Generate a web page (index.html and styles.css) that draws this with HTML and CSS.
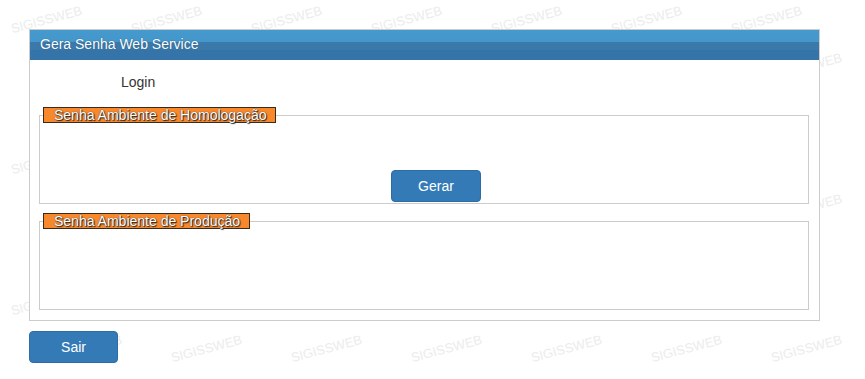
FILE: index.html
```
<html lang="pt-BR">

<head>
  <meta charset="utf-8" />
  <title>Gera Senha Web Service</title>
  <link rel="stylesheet" href="styles.css">
</head>

<body>

  <div class="marks" id="marks" aria-hidden="true"></div>

  <div class="page">
    <div class="panel">
      <div class="panel-head">Gera Senha Web Service</div>
      <div class="panel-body">
        <div class="login">Login</div>

        <fieldset class="box">
          <legend>Senha Ambiente de Homologação</legend>
          <div class="box-body">
            <button class="btn gerar">Gerar</button>
          </div>
        </fieldset>

        <fieldset class="box second">
          <legend>Senha Ambiente de Produção</legend>
          <div class="box-body"></div>
        </fieldset>
      </div>
    </div>

    <button class="btn sair">Sair</button>
  </div>

  <script>
    // background watermark, same stamp repeated on a slanted grid
    var marks = document.getElementById("marks");
    var html = "";
    for (let row = 0; row < 8; row++) {
      let shift = (10 + row * 40) % 120;
      for (let col = 0; col < 8; col++) {
        let x = shift + col * 120;
        let y = 12 + row * 47;
        if (x + 80 > 865) continue;
        html += `<span class="mark" style="left:${x}px;top:${y}px">SIGISSWEB</span>`;
      }
    }
    marks.innerHTML = html;
  </script>
</body>

</html>
```

FILE: styles.css
```
body {
  font-family: 'Liberation Sans', Arial, sans-serif;
  font-size: 14px;
  color: #333;
  background-color: #fff;
  margin: 0;
  padding: 0;
}

.marks {
  position: absolute;
  top: 0;
  left: 0;
  width: 100%;
  height: 379px;
  overflow: hidden;
}

.mark {
  position: absolute;
  font-size: 13px;
  color: #ececec;
  transform: rotate(-15deg);
  white-space: nowrap;
}

.page {
  position: relative;
  padding: 29px 0 0 29px;
}

.panel {
  width: 791px;
  box-sizing: border-box;
  border: 1px solid #ccc;
  background-color: #fff;
}

.panel-head {
  height: 30px;
  line-height: 29px;
  padding-left: 10px;
  color: #fff;
  font-size: 14px;
  text-shadow: 0 0 1px #1d4f7a;
  background: linear-gradient(to bottom, #4599cc 0, #4497ca 40%, #3a79a9 40%, #3a79a9 67%, #3474a9 67%, #3474a9 100%);
}

.panel-body {
  padding: 12px 0 10px 0;
}

.login {
  height: 20px;
  line-height: 20px;
  padding-left: 91px;
  margin-bottom: 15px;
}

.box {
  margin: 0 10px 0 9px;
  padding: 0;
  border: 1px solid #ccc;
}

.box.second {
  margin-top: 9px;
}

.box legend {
  margin-left: 3px;
  padding: 0 9px 0 10px;
  line-height: 14px;
  font-size: 14px;
  color: #fff;
  background-color: #f7882c;
  border: 1px solid #3a2a1a;
  text-shadow: 1px 1px 1px #222, 0 0 1px #222;
}

.box-body {
  height: 80px;
  box-sizing: border-box;
  padding: 47px 0 0 351px;
}

.btn {
  height: 32px;
  font-family: 'Liberation Sans', Arial, sans-serif;
  font-size: 14px;
  color: #fff;
  background-color: #337ab7;
  border: 1px solid #2e6da4;
  border-radius: 4px;
  padding: 0;
  display: block;
}

.gerar {
  width: 90px;
}

.sair {
  width: 89px;
  margin-top: 10px;
}
```
